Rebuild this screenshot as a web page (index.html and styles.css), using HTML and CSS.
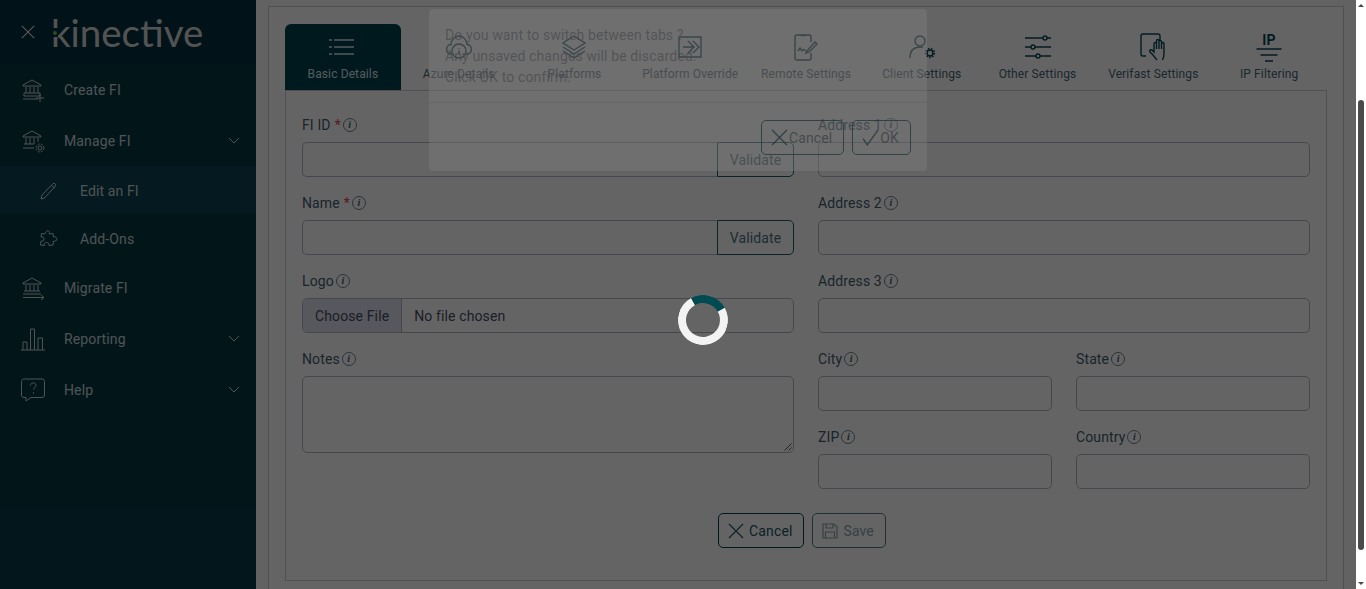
FILE: index.html
```html
<!DOCTYPE html>
<html lang="en">
<head>
    <meta charset="UTF-8">
    <meta name="viewport" content="width=device-width, initial-scale=1.0">
    <title>Edit an FI</title>
    <link rel="stylesheet" href="styles.css">
</head>
<body>
    <div class="app">
        <aside class="sidebar">
            <div class="brand">
                <svg class="brand-close" viewBox="0 0 16 16"><path d="M1 1l14 14M15 1L1 15"/></svg>
                <span class="brand-logo"><span class="brand-gap"><span class="brand-dot"></span></span>kinective</span>
            </div>
            <nav class="menu">
                <a class="menu-item">
                    <svg class="menu-icon" viewBox="0 0 26 26"><path d="M3 8L12 3l9 5v1H3zM4 19v-3h16v3H4zM6 10v6M10 10v6M14 10v6M18 10v6M3 22h15M20 17v8M16 21h8"/></svg>
                    <span>Create FI</span>
                </a>
                <a class="menu-item">
                    <svg class="menu-icon" viewBox="0 0 26 26"><path d="M3 8L12 3l9 5v1H3zM6 10v6M10 10v6M14 10v6M18 10v4M4 16h10M3 20h11"/><circle cx="20" cy="20" r="2"/><circle cx="20" cy="20" r="4" stroke-dasharray="2 1.2"/></svg>
                    <span>Manage FI</span>
                    <svg class="menu-caret" viewBox="0 0 12 7"><path d="M1 1l5 5 5-5"/></svg>
                </a>
                <a class="menu-item sub active">
                    <svg class="menu-icon small" viewBox="0 0 20 20"><path d="M3 14L14 2.500c1-1 3.500 1 2.500 2.500L5.500 17l-3.500 1zM12.500 4.500l3 2.500"/></svg>
                    <span>Edit an FI</span>
                </a>
                <a class="menu-item sub">
                    <svg class="menu-icon small" viewBox="0 0 20 20"><path d="M8 2c2-1 3 1 2 3l4-.5.5 3.500c2-1 4 1 3 3s-3 1-3 1l-.5 4-4 .5c.5-2-1-3-2.500-3s-2.500 1-2 3l-4-.5.5-4c2 .5 3-.5 3-2s-1-2.500-3-2l.5-3.500 3.500.5C6.500 4 6.500 3 8 2z"/></svg>
                    <span>Add-Ons</span>
                </a>
                <a class="menu-item">
                    <svg class="menu-icon" viewBox="0 0 26 26"><path d="M3 8L12 3l9 5v1H3zM6 10v6M10 10v6M14 10v6M18 10v6M4 16h16M3 19h18M3 22.500h21M21 20l3 2.500-3 2.500"/></svg>
                    <span>Migrate FI</span>
                </a>
                <a class="menu-item">
                    <svg class="menu-icon" viewBox="0 0 26 26"><path d="M1 24h24M3 24v-8h4v8M10.500 24V3h4v21M18 24V12h4.500v12"/></svg>
                    <span>Reporting</span>
                    <svg class="menu-caret" viewBox="0 0 12 7"><path d="M1 1l5 5 5-5"/></svg>
                </a>
                <a class="menu-item">
                    <svg class="menu-icon" viewBox="0 0 26 26"><path d="M4 2h18c1.500 0 2.500 1 2.500 2.500V18c0 1.500-1 2.500-2.500 2.500H11L6 24v-3.500H4c-1.500 0-2.500-1-2.500-2.500V4.500C1.500 3 2.500 2 4 2zM10.500 8.500c0-3.500 5.500-3.500 5.500 0 0 2-2.500 2-2.500 4M13.500 15v1.500"/></svg>
                    <span>Help</span>
                    <svg class="menu-caret" viewBox="0 0 12 7"><path d="M1 1l5 5 5-5"/></svg>
                </a>
            </nav>
        </aside>

        <main class="content">
            <div class="card">
                <div class="tabs">
                    <a class="tab active">
                        <svg class="tab-icon" viewBox="0 0 30 30"><path d="M1 8h3M6 8h20M1 15h3M6 15h20M1 22h3M6 22h20"/></svg>
                        <span>Basic Details</span>
                    </a>
                    <a class="tab">
                        <svg class="tab-icon" viewBox="0 0 30 30"><path d="M8 22c-7 0-7-9-1-9.500C7 8 11 4 15 4s8 4 8 8.500c6 .5 6 9.500-1 9.500"/><circle cx="15" cy="19" r="7"/><path d="M15 16v.8M15 18.500v4"/></svg>
                        <span>Azure Details</span>
                    </a>
                    <a class="tab">
                        <svg class="tab-icon" viewBox="0 0 30 30"><path d="M15 4l11 7-11 7-11-7zM4 15l11 7 11-7M4 19l11 7 11-7"/></svg>
                        <span>Platforms</span>
                    </a>
                    <a class="tab">
                        <svg class="tab-icon" viewBox="0 0 30 30"><path d="M4 5h22v20H4zM8 15h11M13 9l6 6-6 6M18 9l6 6-6 6"/></svg>
                        <span>Platform Override</span>
                    </a>
                    <a class="tab">
                        <svg class="tab-icon" viewBox="0 0 30 30"><path d="M20 10V5c0-1.500-1-2-2-2H6C5 3 4 3.500 4 5v22c0 .5 1 1 2 1h12c1 0 2-.5 2-2v-5M10 3.500h4M7 19l2-3 2 3 1.500-1.500L15 19M16 19l8-9 2 2-8 8-3 1z"/></svg>
                        <span>Remote Settings</span>
                    </a>
                    <a class="tab">
                        <svg class="tab-icon" viewBox="0 0 30 30"><circle cx="13" cy="9" r="5"/><path d="M3 26c0-7 3-11 10-11 1 0 2 .2 3 .5"/><circle class="gear" cx="23" cy="21" r="3"/><circle cx="23" cy="21" r="4.500" stroke-dasharray="1.600 1.500"/></svg>
                        <span>Client Settings</span>
                    </a>
                    <a class="tab">
                        <svg class="tab-icon" viewBox="0 0 30 30"><path d="M2 6h18M24 6h4M2 15h6M12 15h16M2 24h11M17 24h11"/><circle cx="22" cy="6" r="2"/><circle cx="10" cy="15" r="2"/><circle cx="15" cy="24" r="2"/></svg>
                        <span>Other Settings</span>
                    </a>
                    <a class="tab">
                        <svg class="tab-icon" viewBox="0 0 30 30"><path d="M8 24H5c-1 0-2-1-2-2V4c0-1 1-2 2-2h15c1 0 2 1 2 2v4M12 20l3 3 4 5M12 20c-1-1 0-3 2-2l2 2v-8c0-2 2.500-2 2.500 0v5-8c0-2 2.500-2 2.500 0v8-7c0-2 2.500-2 2.500 0v7-5c0-2 2.500-2 2.500 0v9c0 3-.5 5-1.500 7"/></svg>
                        <span>Verifast Settings</span>
                    </a>
                    <a class="tab">
                        <svg class="tab-icon" viewBox="0 0 30 30"><text x="15" y="13" class="ip-text">IP</text><path d="M2.500 17h25M6.500 23h17M11 29h8"/></svg>
                        <span>IP Filtering</span>
                    </a>
                </div>

                <form class="panel">
                    <div class="form-cols">
                        <div class="col">
                            <div class="field">
                                <label class="field-label">FI ID <span class="req">*</span><i class="info">i</i></label>
                                <div class="input-group">
                                    <div class="input"></div>
                                    <button type="button" class="btn-validate">Validate</button>
                                </div>
                            </div>
                            <div class="field">
                                <label class="field-label">Name <span class="req">*</span><i class="info">i</i></label>
                                <div class="input-group">
                                    <div class="input"></div>
                                    <button type="button" class="btn-validate">Validate</button>
                                </div>
                            </div>
                            <div class="field">
                                <label class="field-label">Logo<i class="info">i</i></label>
                                <div class="input file-input">
                                    <span class="file-btn">Choose File</span>
                                    <span class="file-name">No file chosen</span>
                                </div>
                            </div>
                            <div class="field">
                                <label class="field-label">Notes<i class="info">i</i></label>
                                <div class="input textarea">
                                    <svg class="grip" viewBox="0 0 8 8"><path d="M7.500 .5L.5 7.500M7.500 4.500l-3 3"/></svg>
                                </div>
                            </div>
                        </div>
                        <div class="col">
                            <div class="field">
                                <label class="field-label">Address 1<i class="info">i</i></label>
                                <div class="input"></div>
                            </div>
                            <div class="field">
                                <label class="field-label">Address 2<i class="info">i</i></label>
                                <div class="input"></div>
                            </div>
                            <div class="field">
                                <label class="field-label">Address 3<i class="info">i</i></label>
                                <div class="input"></div>
                            </div>
                            <div class="two-up">
                                <div class="field">
                                    <label class="field-label">City<i class="info">i</i></label>
                                    <div class="input"></div>
                                </div>
                                <div class="field">
                                    <label class="field-label">State<i class="info">i</i></label>
                                    <div class="input"></div>
                                </div>
                                <div class="field">
                                    <label class="field-label">ZIP<i class="info">i</i></label>
                                    <div class="input"></div>
                                </div>
                                <div class="field">
                                    <label class="field-label">Country<i class="info">i</i></label>
                                    <div class="input"></div>
                                </div>
                            </div>
                        </div>
                    </div>
                    <div class="form-actions">
                        <button type="button" class="btn btn-cancel">
                            <svg class="btn-icon" viewBox="0 0 16 16"><path d="M1 1l14 14M15 1L1 15"/></svg>Cancel
                        </button>
                        <button type="button" class="btn btn-save">
                            <svg class="btn-icon" viewBox="0 0 16 16"><path d="M1 1h11l3 3v11H1zM4 1v4h7V1M3.500 15V9h9v6"/></svg>Save
                        </button>
                    </div>
                </form>
            </div>
        </main>

        <div class="backdrop">
            <div class="dialog">
                <div class="dialog-body">
                    <p>Do you want to switch between tabs ?</p>
                    <p>Any unsaved changes will be discarded.</p>
                    <p>Click OK to confirm.</p>
                </div>
                <div class="dialog-actions">
                    <button type="button" class="dialog-btn">
                        <svg class="dialog-icon" viewBox="0 0 16 16"><path d="M1 1l14 14M15 1L1 15"/></svg>Cancel
                    </button>
                    <button type="button" class="dialog-btn">
                        <svg class="dialog-icon" viewBox="0 0 16 16"><path d="M1 9l4 6L15 1"/></svg>OK
                    </button>
                </div>
            </div>
            <div class="spinner"></div>
        </div>
    </div>

    <div class="scrollbar">
        <span class="scroll-up"></span>
        <span class="scroll-thumb"></span>
        <span class="scroll-down"></span>
    </div>
</body>
</html>
```

FILE: styles.css
```css
* {
    box-sizing: border-box;
}
html, body {
    height: 589px;
    margin: 0;
    overflow: hidden;
}
body {
    display: flex;
    font-family: 'Roboto', 'Liberation Sans', sans-serif;
    font-size: 14px;
    letter-spacing: 0.12px;
    color: #2f4658;
    background-color: #fff;
}
svg {
    fill: none;
    stroke: currentColor;
    flex-shrink: 0;
}
.app {
    position: relative;
    flex: 1;
    display: flex;
    min-width: 0;
    height: 589px;
    overflow: hidden;
}

/* sidebar */
.sidebar {
    width: 256px;
    flex-shrink: 0;
    background-color: #073743;
    color: #c4cfd3;
}
.brand {
    display: flex;
    align-items: center;
    height: 64px;
    padding-left: 21px;
    background-color: #04303c;
}
.brand-close {
    width: 14px;
    height: 14px;
    stroke-width: 1.3;
    color: #ddd;
}
.brand-logo {
    position: relative;
    margin-left: 16px;
    font-family: 'Lato', sans-serif;
    font-size: 38.5px;
    line-height: 30px;
    letter-spacing: 0;
    color: #cfcfcf;
}
.brand-gap {
    position: absolute;
    left: 0;
    top: 11px;
    display: flex;
    justify-content: center;
    align-items: center;
    width: 7px;
    height: 9px;
    background-color: #04303c;
}
.brand-dot {
    width: 4px;
    height: 4px;
    border-radius: 50%;
    background-color: #6fbf3f;
}
.menu {
    display: flex;
    flex-direction: column;
}
.menu-item {
    display: flex;
    align-items: center;
    height: 51px;
    padding: 0 16px 0 20px;
}
.menu-item.sub {
    height: 48px;
    padding-top: 1px;
    padding-left: 39px;
}
.menu-item.active {
    background-color: #0b4350;
}
.menu-icon {
    width: 26px;
    height: 26px;
    margin-right: 18px;
    stroke-width: 1;
}
.menu-icon.small {
    width: 20px;
    height: 20px;
    margin-right: 21px;
}
.menu-caret {
    width: 12px;
    height: 7px;
    margin-left: auto;
    stroke-width: 1;
}

/* main */
.content {
    flex: 1;
    min-width: 0;
    padding: 6px 12px 0;
    background-color: #f5f5f5;
}
.card {
    height: 600px;
    padding: 17px 16px 0;
    border: 1px solid #c8c8cc;
    background-color: #fbfbfc;
}
.tabs {
    display: grid;
    grid-template-columns: repeat(9, 1fr);
    height: 66px;
}
.tab {
    display: flex;
    flex-direction: column;
    align-items: center;
    padding-top: 8px;
    font-size: 12px;
    color: #3f6472;
}
.tab.active {
    color: #d6e2e6;
    background-color: #003f4e;
    border-radius: 6px 6px 0 0;
}
.tab-icon {
    width: 30px;
    height: 30px;
    margin-bottom: 5px;
    stroke-width: 1.4;
    color: #0a4453;
}
.tab.active .tab-icon {
    color: #d6e2e6;
}
.gear {
    stroke-width: 1.6;
}
.ip-text {
    fill: #0a4453;
    stroke: none;
    font-size: 14px;
    font-weight: 700;
    text-anchor: middle;
}
.panel {
    height: 491px;
    padding: 25px 16px 0;
    border: 1px solid #c8c8cc;
}
.form-cols {
    display: grid;
    grid-template-columns: 1fr 1fr;
    column-gap: 24px;
}
.field {
    margin-bottom: 17px;
}
.field-label {
    display: flex;
    align-items: center;
    height: 18px;
    margin-bottom: 8px;
    line-height: 18px;
    color: #3f5a6c;
}
.req {
    margin-left: 4px;
    color: #d9414f;
}
.info {
    display: inline-flex;
    justify-content: center;
    align-items: center;
    width: 14px;
    height: 14px;
    margin-left: 2px;
    border: 1px solid #6b7d87;
    border-radius: 50%;
    font-family: 'Liberation Serif', serif;
    font-size: 10px;
    font-weight: 700;
    color: #3f5a6c;
}
.input {
    flex: 1;
    height: 35px;
    border: 1px solid #b0afc0;
    border-radius: 5px;
    background-color: #fbfbfc;
}
.input-group {
    display: flex;
}
.input-group .input {
    border-radius: 5px 0 0 5px;
    border-right: 0;
}
.btn-validate {
    width: 77px;
    height: 35px;
    padding: 0;
    border: 1px solid #1f5766;
    border-radius: 0 5px 5px 0;
    background: none;
    font-family: inherit;
    font-size: 14px;
    letter-spacing: inherit;
    color: #47707e;
}
.file-input {
    display: flex;
    align-items: center;
    overflow: hidden;
    color: #444c5e;
}
.file-btn {
    display: flex;
    align-items: center;
    height: 100%;
    padding: 0 12px;
    border-right: 1px solid #b0afc0;
    background-color: #d9dbe8;
}
.file-name {
    margin-left: 12px;
}
.textarea {
    position: relative;
    height: 77px;
}
.grip {
    position: absolute;
    right: 1px;
    bottom: 1px;
    width: 8px;
    height: 8px;
    color: #555;
}
.two-up {
    display: grid;
    grid-template-columns: 1fr 1fr;
    column-gap: 24px;
}
.form-actions {
    display: flex;
    justify-content: center;
    margin-top: 7px;
}
.btn {
    display: flex;
    align-items: center;
    height: 35px;
    margin-right: 8px;
    padding: 0 11px 0 9px;
    border: 1px solid #003f4e;
    border-radius: 5px;
    background: none;
    font-family: inherit;
    font-size: 14px;
    letter-spacing: inherit;
    color: #1d5364;
}
.btn-icon {
    width: 16px;
    height: 16px;
    margin-right: 5px;
    stroke-width: 1.2;
}
.btn-save {
    border-color: #4f7680;
    color: #8aa0a8;
}

/* backdrop, dialog and loader */
.backdrop {
    position: absolute;
    inset: 0;
    display: flex;
    justify-content: center;
    background-color: rgba(0, 0, 0, 0.6);
}
.dialog {
    width: 498px;
    height: 162px;
    margin-top: 9px;
    border-radius: 4px;
    background-color: rgba(125, 125, 125, 0.45);
    color: rgba(70, 72, 76, 0.7);
}
.dialog-body {
    height: 94px;
    padding: 16px 16px 0;
    border-bottom: 1px solid rgba(0, 0, 0, 0.08);
    line-height: 21px;
}
.dialog-body p {
    margin: 0;
}
.dialog-actions {
    display: flex;
    justify-content: flex-end;
    gap: 8px;
    padding: 17px 16px 0;
}
.dialog-btn {
    display: flex;
    align-items: center;
    height: 35px;
    padding: 0 11px 0 9px;
    border: 1px solid rgba(30, 52, 58, 0.75);
    border-radius: 5px;
    background: none;
    font-family: inherit;
    font-size: 14px;
    letter-spacing: inherit;
    color: rgba(50, 56, 60, 0.7);
}
.dialog-icon {
    width: 17px;
    height: 17px;
    margin-right: 1px;
    stroke-width: 1.2;
    color: rgba(30, 52, 58, 0.8);
}
.spinner {
    position: absolute;
    left: 50%;
    top: 50%;
    width: 50px;
    height: 50px;
    border: 8px solid #f3f3f3;
    border-top-color: #004a52;
    border-radius: 50%;
    transform: rotate(16deg);
}

/* page scrollbar */
.scrollbar {
    display: flex;
    flex-direction: column;
    align-items: center;
    width: 10px;
    flex-shrink: 0;
    background-color: #fff;
}
.scroll-up, .scroll-down {
    width: 0;
    height: 0;
    border-left: 3px solid transparent;
    border-right: 3px solid transparent;
}
.scroll-up {
    margin-top: 4px;
    border-bottom: 3px solid #4a4a4a;
}
.scroll-thumb {
    width: 6px;
    height: 450px;
    margin-top: 93px;
    border-radius: 3px;
    background-color: #4a4a4a;
}
.scroll-down {
    margin-top: auto;
    margin-bottom: 4px;
    border-top: 3px solid #4a4a4a;
}
```
